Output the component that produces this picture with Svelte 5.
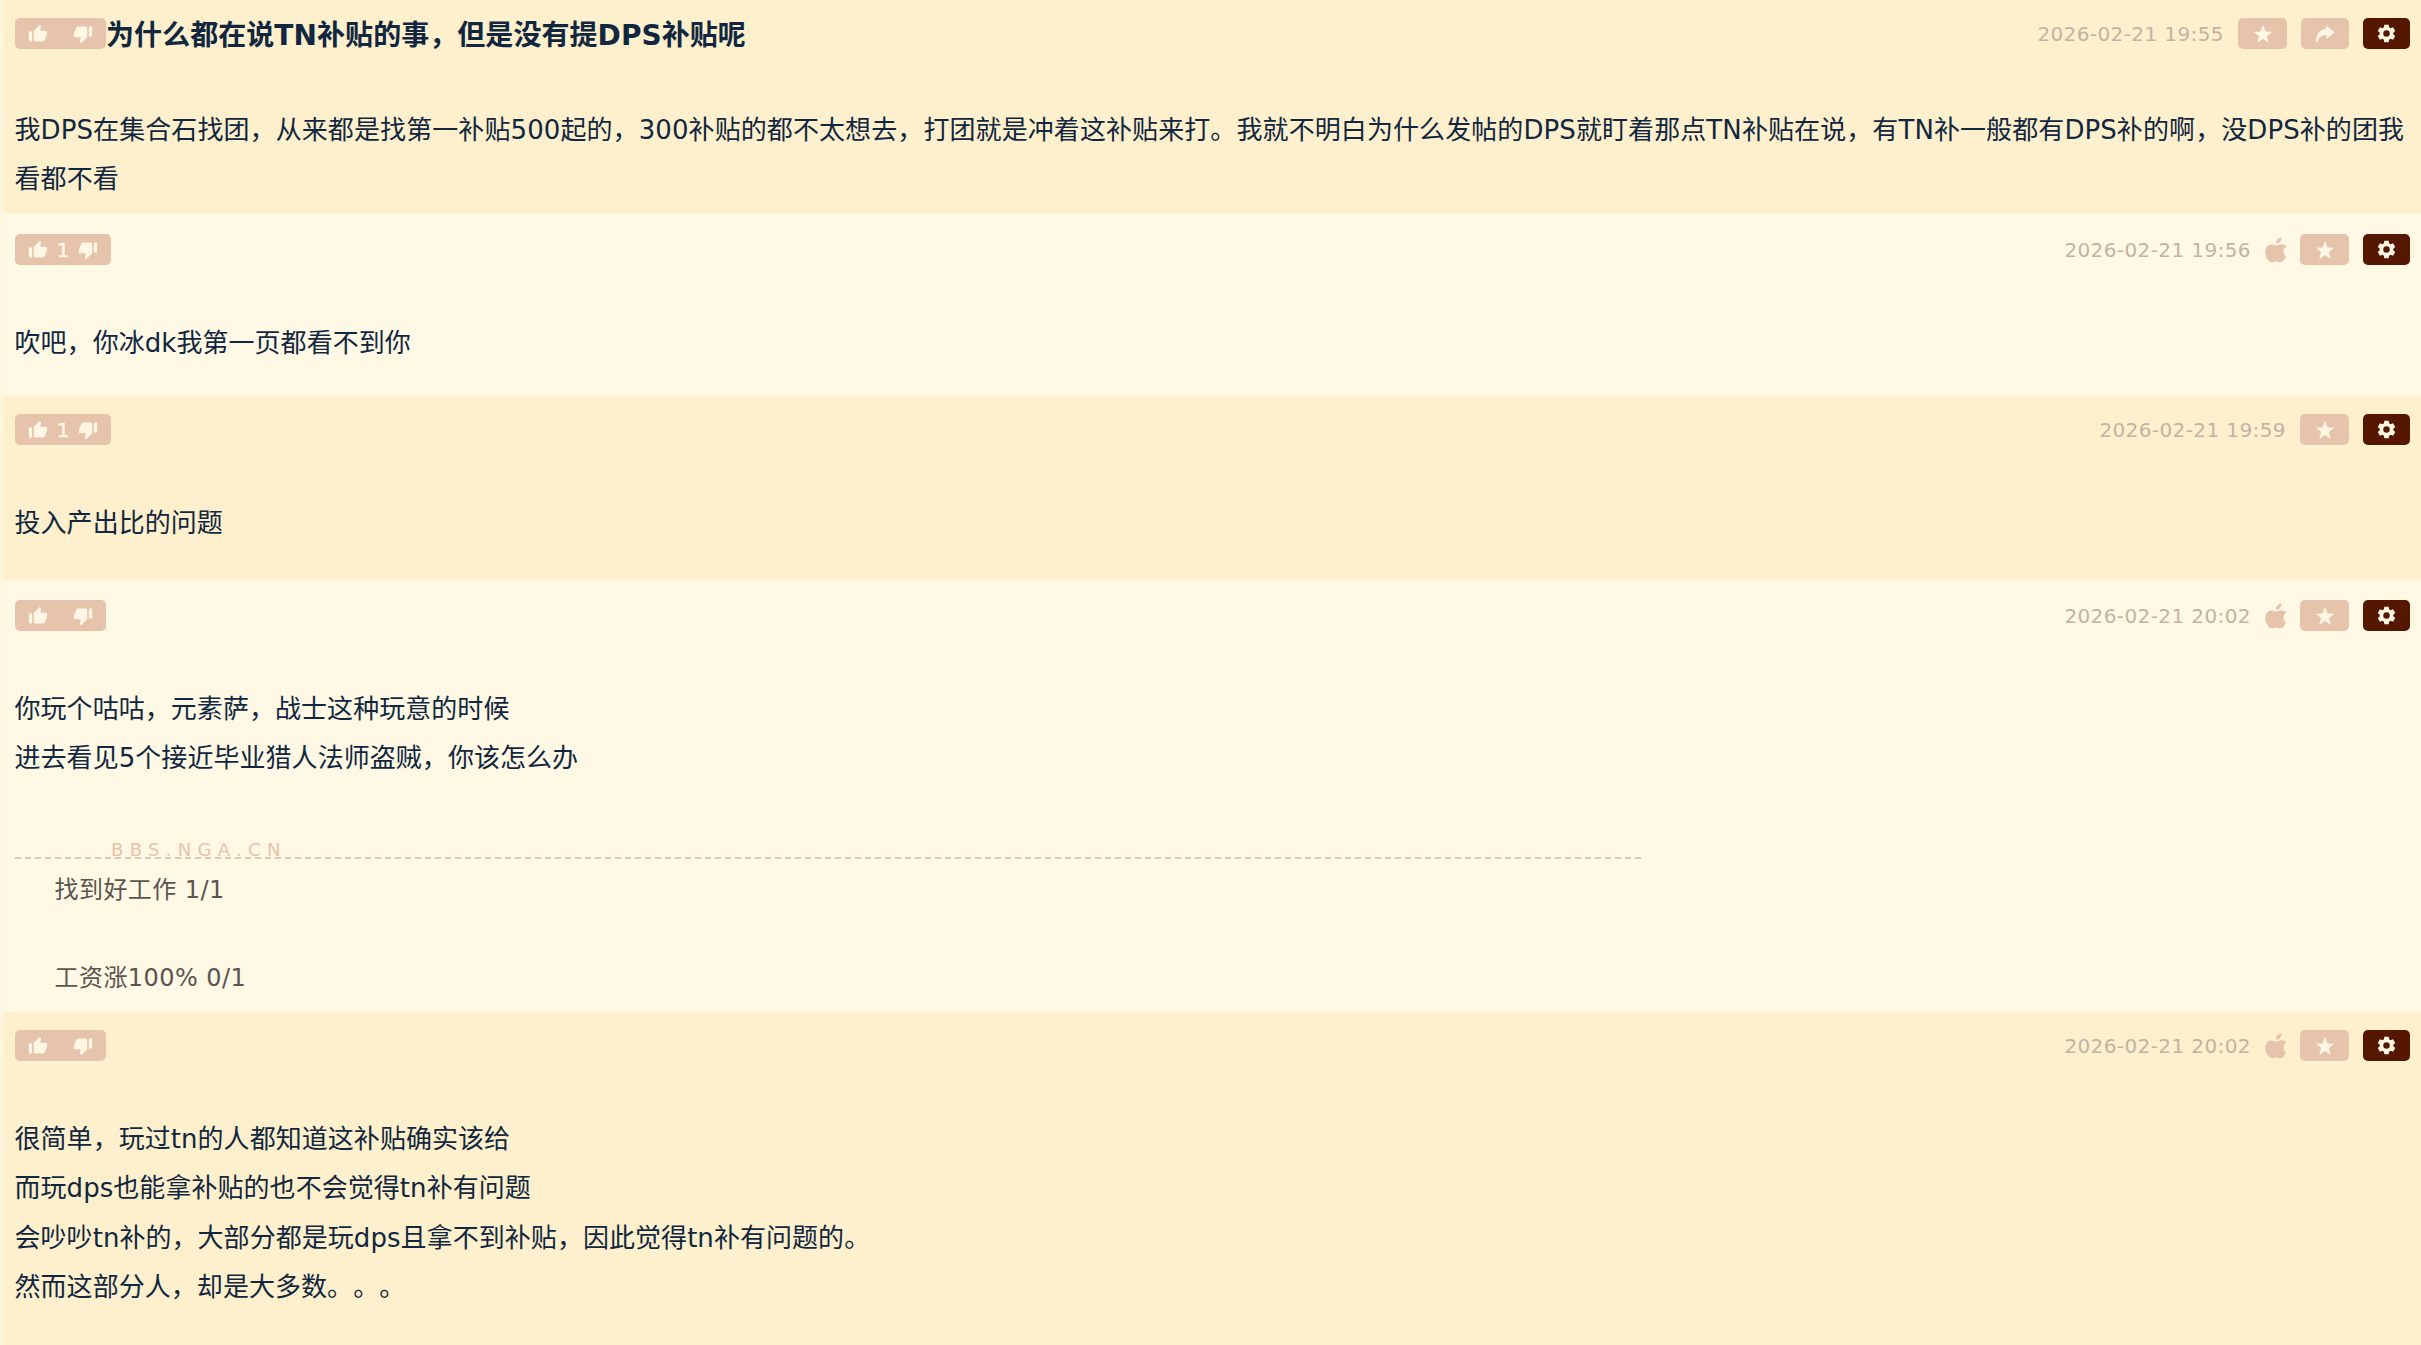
<script>
  const posts = [
    {
      title: "为什么都在说TN补贴的事，但是没有提DPS补贴呢",
      date: "2026-02-21 19:55",
      score: "",
      apple: false,
      share: true,
      lines: [
        "我DPS在集合石找团，从来都是找第一补贴500起的，300补贴的都不太想去，打团就是冲着这补贴来打。我就不明白为什么发帖的DPS就盯着那点TN补贴在说，有TN补一般都有DPS补的啊，没DPS补的团我",
        "看都不看",
      ],
      kind: "first",
    },
    {
      date: "2026-02-21 19:56",
      score: "1",
      apple: true,
      lines: ["吹吧，你冰dk我第一页都看不到你"],
      kind: "second",
    },
    {
      date: "2026-02-21 19:59",
      score: "1",
      apple: false,
      lines: ["投入产出比的问题"],
      kind: "third",
    },
    {
      date: "2026-02-21 20:02",
      score: "",
      apple: true,
      lines: ["你玩个咕咕，元素萨，战士这种玩意的时候", "进去看见5个接近毕业猎人法师盗贼，你该怎么办"],
      sign: ["找到好工作 1/1", "工资涨100% 0/1"],
      kind: "fourth",
    },
    {
      date: "2026-02-21 20:02",
      score: "",
      apple: true,
      lines: [
        "很简单，玩过tn的人都知道这补贴确实该给",
        "而玩dps也能拿补贴的也不会觉得tn补有问题",
        "会吵吵tn补的，大部分都是玩dps且拿不到补贴，因此觉得tn补有问题的。",
        "然而这部分人，却是大多数。。。",
      ],
      kind: "fifth",
    },
  ];
</script>

{#snippet thumb(down)}
  <svg class="thumb" class:down viewBox="0 0 24 24">
    <path d="M1 21h4V9H1v12zm22-11c0-1.1-.9-2-2-2h-6.3l1-4.600.03-.3c0-.4-.17-.8-.44-1.060L14.200 1 7.600 7.600C7.200 7.950 7 8.450 7 9v10c0 1.100.9 2 2 2h9c.83 0 1.540-.5 1.840-1.220l3.020-7.050c.09-.23.14-.47.14-.73v-2z" />
  </svg>
{/snippet}

<div class="thread">
  {#each posts as post}
    <article class="post {post.kind}">
      <header>
        <div class="vote" class:scored={post.score}>
          {@render thumb(false)}
          <span>{post.score}</span>
          {@render thumb(true)}
        </div>
        {#if post.title}
          <h1>{post.title}</h1>
        {/if}
        <div class="tools">
          <time>{post.date}</time>
          {#if post.apple}
            <svg class="apple" viewBox="0 0 22 26">
              <path d="M16.500 0.500c.2 1.900-.6 3.400-1.600 4.500-1 1.100-2.400 1.700-3.900 1.600-.2-1.700.6-3.200 1.600-4.300 1-1.100 2.500-1.700 3.900-1.800z" />
              <path d="M21 19.300c-1 3-3.200 6-5.500 6-1.500 0-2.500-.8-4.200-.8s-2.600.8-4.200.8C4 25.300.3 20.500.3 15c0-4.600 2.900-7.600 6-7.600 2 0 3.400 1.200 5 1.200 1.500 0 3-1.300 5.300-1.300 1.800 0 3.700.8 4.700 2.400-3.700 2.100-3.500 7.600-.3 9.600z" />
            </svg>
          {/if}
          <button class="star" aria-label="star">
            <svg viewBox="0 0 24 24">
              <path d="M12 1l3 7.900 8 .4-6.300 5.200 2.200 8.200L12 18.100l-6.900 4.600 2.200-8.200L1 9.300l8-.4z" />
            </svg>
          </button>
          {#if post.share}
            <button class="share" aria-label="share">
              <svg viewBox="0 0 24 24">
                <path d="M13 1.500l10.500 8.300L14 18.200v-4.700C8 13 4.500 16 2.500 21.500H1C1 13 5.500 6.500 13 6z" />
              </svg>
            </button>
          {/if}
          <button class="gear" aria-label="settings">
            <svg viewBox="0 0 24 24">
              <path fill-rule="evenodd" d="M9.300 1h5.400l.6 3.200 1.900 1.100 3.100-1.100 2.700 4.700-2.500 2.100v2l2.500 2.100-2.700 4.700-3.100-1.100-1.900 1.100-.6 3.300H9.300l-.6-3.300-1.900-1.100-3.100 1.100L1 15.100 3.500 13v-2L1 8.900l2.700-4.700 3.100 1.100 1.900-1.100zM12 7.900a4.100 4.100 0 1 0 0 8.200 4.100 4.100 0 0 0 0-8.200z" />
            </svg>
          </button>
        </div>
      </header>
      <div class="content">
        {#each post.lines as line}
          <p>{line}</p>
        {/each}
      </div>
      {#if post.sign}
        <div class="sign">
          <div class="rule">BBS.NGA.CN</div>
          {#each post.sign as line}
            <p>{line}</p>
          {/each}
        </div>
      {/if}
    </article>
  {/each}
</div>

<style>
  :global(body) {
    margin: 0;
    background: #ffefcd;
  }

  .thread {
    height: 1345px;
    overflow: hidden;
    font-family: "DejaVu Sans", "Noto Sans CJK SC", sans-serif;
    text-spacing-trim: space-all;
    color: #10273f;
  }

  .post {
    box-sizing: border-box;
    padding: 18px 11px 0 12px;
    border-left: 1px solid #fff3d9;
    box-shadow: inset 2px 0 #fff8e5;
    background: #feefcd;
  }

  .first {
    height: 213px;
  }

  .second {
    height: 183px;
    padding-top: 21px;
    background: #fff8e5;
  }

  .third {
    height: 184px;
  }

  .fourth {
    height: 432px;
    padding-top: 20px;
    background: #fff8e5;
  }

  .fifth {
    height: 333px;
  }

  header {
    display: flex;
    align-items: center;
    height: 31px;
  }

  .vote {
    display: flex;
    align-items: center;
    justify-content: space-between;
    box-sizing: border-box;
    width: 91px;
    height: 31px;
    margin-left: 2px;
    padding: 0 13px;
    border-radius: 5px;
    background: #e6c3ab;
    color: #fff7e4;
    font-size: 20px;
  }

  .vote.scored {
    width: 96px;
  }

  .vote span {
    -webkit-text-stroke: 0.5px #fff7e4;
  }

  svg {
    display: block;
    width: 20px;
    height: 20px;
    fill: #fff7e4;
  }

  .thumb {
    width: 20px;
    height: 20px;
  }

  .down {
    transform: rotate(180deg);
  }

  h1 {
    margin: 0;
    padding-top: 3px;
    font-size: 28px;
    line-height: 31px;
    letter-spacing: 0.06px;
    white-space: nowrap;
  }

  .tools {
    display: flex;
    align-items: center;
    gap: 14px;
    margin-left: auto;
  }

  time {
    font-size: 20px;
    letter-spacing: 0.4px;
    color: #c1b4a2;
  }

  .apple {
    width: 22px;
    height: 26px;
    margin-right: -1px;
    fill: #e6c3ab;
  }

  button {
    display: flex;
    align-items: center;
    justify-content: center;
    width: 49px;
    height: 31px;
    padding: 0;
    border: 0;
    border-radius: 5px;
    background: #e6c3ab;
  }

  .share {
    width: 48px;
  }

  .gear {
    width: 47px;
    background: #551700;
  }

  .gear svg {
    width: 19px;
    height: 19px;
  }

  .content {
    padding: 54px 0 0 1.5px;
  }

  .first .content {
    padding-top: 57px;
  }

  p {
    margin: 0;
    font-size: 26px;
    line-height: 49.4px;
    letter-spacing: 0.05px;
    white-space: nowrap;
  }

  .first p {
    letter-spacing: 0.09px;
  }

  .sign {
    margin-left: 2px;
    color: #5a5550;
  }

  .rule {
    box-sizing: border-box;
    width: 1629px;
    height: 24px;
    margin-top: 51px;
    margin-bottom: -13px;
    padding-left: 96px;
    background: repeating-linear-gradient(90deg, #e2c5b1 0 6px, transparent 6px 10px) bottom / 100% 2px no-repeat;
    color: #e6c3ab;
    font-size: 18px;
    line-height: 29px;
    letter-spacing: 6.3px;
  }

  .sign p {
    padding-left: 39.5px;
    font-size: 24px;
    line-height: 88px;
    letter-spacing: 0.45px;
  }
</style>
